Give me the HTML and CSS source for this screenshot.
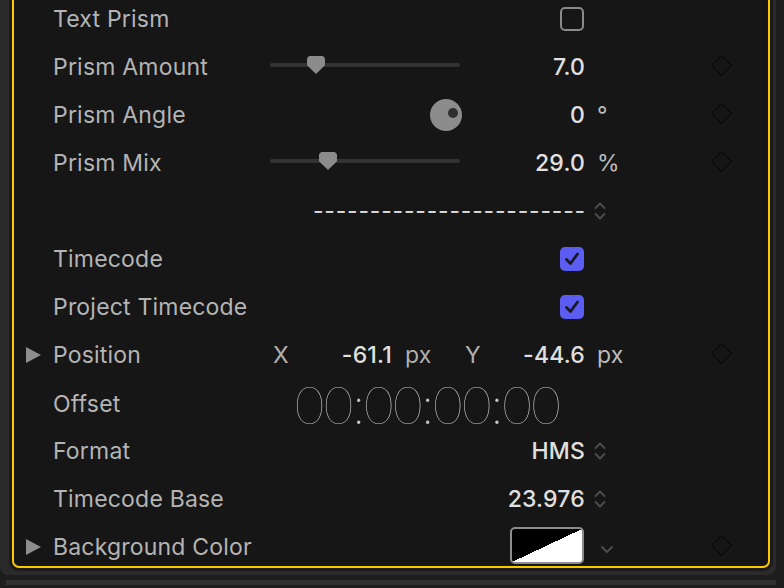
FILE: index.html
```html
<!DOCTYPE html>
<html lang="en">
<head>
  <meta charset="UTF-8" />
  <title>Text Inspector</title>
  <link rel="stylesheet" href="styles.css">
</head>
<body>
  <div class="shell">
    <div class="panel">
      <div class="row">
        <span class="twisty"></span>
        <span class="label">Text Prism</span>
        <span class="control"></span>
        <span class="value"><span class="check"></span></span>
        <span class="unit"></span>
        <span class="key"></span>
      </div>

      <div class="row">
        <span class="twisty"></span>
        <span class="label">Prism Amount</span>
        <span class="control">
          <span class="slider"><span class="thumb" style="left: 37px"></span></span>
        </span>
        <span class="value">7.0</span>
        <span class="unit"></span>
        <span class="key"><span class="diamond"></span></span>
      </div>

      <div class="row">
        <span class="twisty"></span>
        <span class="label">Prism Angle</span>
        <span class="control"><span class="dial"></span></span>
        <span class="value">0</span>
        <span class="unit">°</span>
        <span class="key"><span class="diamond"></span></span>
      </div>

      <div class="row">
        <span class="twisty"></span>
        <span class="label">Prism Mix</span>
        <span class="control">
          <span class="slider"><span class="thumb" style="left: 49px"></span></span>
        </span>
        <span class="value">29.0</span>
        <span class="unit">%</span>
        <span class="key"><span class="diamond"></span></span>
      </div>

      <div class="row">
        <span class="twisty"></span>
        <span class="label"></span>
        <span class="value wide dashes">------------------------</span>
        <span class="unit stepper">
          <svg width="14" height="24" viewBox="0 0 14 24"><path d="M2.5 9 L7 4.5 L11.5 9 M2.5 15 L7 19.5 L11.5 15" /></svg>
        </span>
        <span class="key"></span>
      </div>

      <div class="row">
        <span class="twisty"></span>
        <span class="label">Timecode</span>
        <span class="control"></span>
        <span class="value"><span class="check on"><svg width="16" height="14" viewBox="0 0 16 14"><path d="M2.5 7.5 L6.5 11.5 L13.5 2" /></svg></span></span>
        <span class="unit"></span>
        <span class="key"></span>
      </div>

      <div class="row">
        <span class="twisty"></span>
        <span class="label">Project Timecode</span>
        <span class="control"></span>
        <span class="value"><span class="check on"><svg width="16" height="14" viewBox="0 0 16 14"><path d="M2.5 7.5 L6.5 11.5 L13.5 2" /></svg></span></span>
        <span class="unit"></span>
        <span class="key"></span>
      </div>

      <div class="row">
        <span class="twisty"><span class="tri"></span></span>
        <span class="label">Position</span>
        <span class="pair">
          <span class="axis">X</span>
          <span class="num">-61.1</span>
          <span class="px">px</span>
        </span>
        <span class="value pair2">
          <span class="axis">Y</span>
          <span class="num">-44.6</span>
        </span>
        <span class="unit">px</span>
        <span class="key"><span class="diamond"></span></span>
      </div>

      <div class="row">
        <span class="twisty"></span>
        <span class="label">Offset</span>
        <span class="wide timecode">00:00:00:00</span>
        <span class="unit"></span>
        <span class="key"></span>
      </div>

      <div class="row">
        <span class="twisty"></span>
        <span class="label">Format</span>
        <span class="control"></span>
        <span class="value">HMS</span>
        <span class="unit stepper">
          <svg width="14" height="24" viewBox="0 0 14 24"><path d="M2.5 9 L7 4.5 L11.5 9 M2.5 15 L7 19.5 L11.5 15" /></svg>
        </span>
        <span class="key"></span>
      </div>

      <div class="row">
        <span class="twisty"></span>
        <span class="label">Timecode Base</span>
        <span class="control"></span>
        <span class="value">23.976</span>
        <span class="unit stepper">
          <svg width="14" height="24" viewBox="0 0 14 24"><path d="M2.5 9 L7 4.5 L11.5 9 M2.5 15 L7 19.5 L11.5 15" /></svg>
        </span>
        <span class="key"></span>
      </div>

      <div class="row">
        <span class="twisty"><span class="tri"></span></span>
        <span class="label">Background Color</span>
        <span class="control"></span>
        <span class="value"><span class="swatch"></span></span>
        <span class="unit drop">
          <svg width="14" height="10" viewBox="0 0 14 10"><path d="M2 3 L7 8 L12 3" /></svg>
        </span>
        <span class="key"><span class="diamond"></span></span>
      </div>
    </div>
  </div>
  <div class="next"></div>
</body>
</html>
```

FILE: styles.css
```css
body {
  margin: 0;
  width: 784px;
  height: 588px;
  overflow: hidden;
  background-color: #1d1d1d;
  font-family: 'Inter', 'Noto Sans', sans-serif;
  font-size: 23px;
  letter-spacing: 0.2px;
  color: #b4b4b4;
}

.shell {
  width: 776px;
  height: 582px;
  margin-top: -7px;
  padding: 0 6px 7px 12px;
  box-sizing: border-box;
  background-color: #2a2a2a;
  border-radius: 0 0 8px 8px;
}

.panel {
  height: 575px;
  box-sizing: border-box;
  border: 2px solid #f7c900;
  border-radius: 7px;
  background-color: #161616;
  box-shadow: 0 0 0 3px #1a1a1a;
  overflow: hidden;
}

.next {
  width: 770px;
  height: 5px;
  margin: 5px 0 0 6px;
  background-color: #313131;
}

.row {
  display: grid;
  grid-template-columns: 39px 217px 190px 125px 89px 1fr;
  align-items: center;
  height: 48px;
  line-height: 48px;
}

.twisty {
  display: flex;
  align-items: center;
  height: 48px;
}

.tri {
  width: 0;
  height: 0;
  margin-left: 12px;
  border-top: 8px solid transparent;
  border-bottom: 8px solid transparent;
  border-left: 15px solid #8e8e8e;
}

.label {
  white-space: nowrap;
}

.control {
  display: flex;
  align-items: center;
  justify-content: flex-end;
  height: 48px;
}

.value {
  display: flex;
  align-items: center;
  justify-content: flex-end;
  height: 48px;
  color: #e0e0e0;
  font-weight: 500;
  white-space: nowrap;
}

.wide {
  grid-column: 3 / 5;
}

.unit {
  display: flex;
  align-items: center;
  height: 48px;
  padding-left: 12px;
  color: #bcbcbc;
}

.key {
  display: flex;
  align-items: center;
  justify-content: center;
  height: 48px;
  padding-bottom: 4px;
  box-sizing: border-box;
}

.diamond {
  width: 13px;
  height: 13px;
  border: 1.5px solid #080808;
  transform: rotate(45deg);
}

/* slider */
.slider {
  position: relative;
  width: 190px;
  height: 4px;
  margin-bottom: 4px;
  border-radius: 2px;
  background-color: #333;
}

.thumb {
  position: absolute;
  top: -7px;
  width: 18px;
  height: 18px;
  background-color: #8b8b8b;
  clip-path: polygon(0 12%, 12% 0, 88% 0, 100% 12%, 100% 52%, 50% 100%, 0 52%);
}

/* angle dial */
.dial {
  position: relative;
  width: 32px;
  height: 32px;
  margin-right: -2px;
  border-radius: 50%;
  background-color: #8c8c8c;
}

.dial::after {
  content: '';
  position: absolute;
  top: 9px;
  left: 18px;
  width: 10px;
  height: 10px;
  border-radius: 50%;
  background-color: #2f2f2f;
}

/* checkboxes */
.check {
  width: 24px;
  height: 24px;
  margin-right: 1px;
  box-sizing: border-box;
  border: 2px solid #8a8a8a;
  border-radius: 5px;
  display: flex;
  align-items: center;
  justify-content: center;
}

.check.on {
  border: none;
  background-color: #5b5cf2;
}

.check svg path {
  fill: none;
  stroke: #181826;
  stroke-width: 2.8;
  stroke-linecap: round;
  stroke-linejoin: round;
}

.dashes {
  color: #dcdcdc;
  font-weight: 400;
  letter-spacing: 0.8px;
  margin-right: -1px;
}

.stepper {
  padding-left: 8px;
}

.stepper svg path,
.drop svg path {
  fill: none;
  stroke: #4f4f4f;
  stroke-width: 1.8;
  stroke-linecap: round;
  stroke-linejoin: round;
}

.drop {
  padding-left: 15px;
  padding-top: 4px;
  box-sizing: border-box;
}

/* position row */
.pair {
  display: grid;
  grid-template-columns: 20px 102px auto;
  align-items: center;
  height: 48px;
}

.axis {
  color: #b0b0b0;
  font-weight: 400;
}

.pair .axis {
  padding-left: 3px;
}

.num {
  color: #e0e0e0;
  font-weight: 500;
  text-align: right;
}

.px {
  padding-left: 13px;
  color: #b0b0b0;
}

.pair2 {
  justify-content: space-between;
  padding-left: 5px;
}

.timecode {
  text-align: center;
  font-family: 'Lato', sans-serif;
  font-weight: 200;
  font-size: 51px;
  letter-spacing: -0.6px;
  color: #c4c4c4;
  padding-top: 2px;
}

.swatch {
  width: 74px;
  height: 37px;
  margin-right: 1px;
  margin-bottom: 3px;
  box-sizing: border-box;
  border: 2px solid #8d8d8d;
  border-radius: 5px;
  background: linear-gradient(to bottom right, #000 50%, #fff 50%);
}
```
